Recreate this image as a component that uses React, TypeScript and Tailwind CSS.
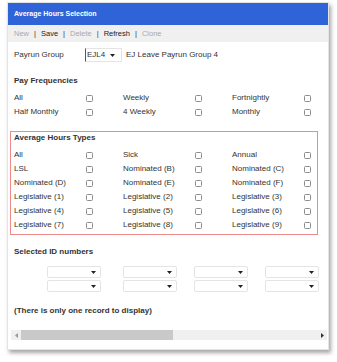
import { ReactNode } from 'react';

const payFrequencies = [
  ['All', 'Weekly', 'Fortnightly'],
  ['Half Monthly', '4 Weekly', 'Monthly'],
];

const hoursTypes = [
  ['All', 'Sick', 'Annual'],
  ['LSL', 'Nominated (B)', 'Nominated (C)'],
  ['Nominated (D)', 'Nominated (E)', 'Nominated (F)'],
  ['Legislative (1)', 'Legislative (2)', 'Legislative (3)'],
  ['Legislative (4)', 'Legislative (5)', 'Legislative (6)'],
  ['Legislative (7)', 'Legislative (8)', 'Legislative (9)'],
];

function Check() {
  return <span className="block shrink-0 w-[7px] h-[7px] border border-[#8c8c8c] rounded-[1.5px] bg-white" />;
}

function CheckGrid({ rows }: { rows: string[][] }) {
  return (
    <div className="flex flex-col">
      {rows.map((row, i) => (
        <div key={i} className="flex h-[14px] items-center">
          {row.map((label, j) => (
            <div key={label} className={`flex shrink-0 items-center ${j < 2 ? 'w-[109px]' : 'w-[79px]'}`}>
              <span className="w-[72px] shrink-0 text-[8px] text-[#333] whitespace-nowrap">{label}</span>
              <Check />
            </div>
          ))}
        </div>
      ))}
    </div>
  );
}

function Arrow() {
  return (
    <svg width="5" height="3" viewBox="0 0 5 3" className="block shrink-0">
      <path d="M0 0h5L2.5 3z" fill="#222" />
    </svg>
  );
}

function IdSelect({ className }: { className: string }) {
  return (
    <div className={`w-[54px] h-[12px] shrink-0 border border-[#e4e4e4] rounded-[2px] flex items-center justify-end pr-[4px] ${className}`}>
      <Arrow />
    </div>
  );
}

function Sep() {
  return <span className="text-[#333]">|</span>;
}

function Heading({ children, className = '' }: { children: ReactNode; className?: string }) {
  return <div className={`text-[8px] font-bold text-[#333] whitespace-nowrap ${className}`}>{children}</div>;
}

export default function App() {
  return (
    <div className="w-[337px] h-[362px] bg-white pt-[2px] font-['Liberation_Sans',Arial,sans-serif]">
      <div className="ml-[7px] w-[322px] h-[348px] bg-white border border-[#e4e4e4] shadow-[2px_3px_4px_rgba(0,0,0,0.35)] flex flex-col">
        {/* Title bar */}
        <div className="h-[22px] bg-[#2f63d8] flex items-center pl-[6px] text-white text-[7px] font-bold">
          Average Hours Selection
        </div>
        {/* Toolbar */}
        <div className="h-[17px] bg-[#f0f0f0] flex items-center gap-[5px] pl-[6px] text-[7.5px]">
          <span className="text-[#aaa]">New</span>
          <Sep />
          <span className="text-[#222]">Save</span>
          <Sep />
          <span className="text-[#aaa]">Delete</span>
          <Sep />
          <span className="text-[#222]">Refresh</span>
          <Sep />
          <span className="text-[#aaa]">Clone</span>
        </div>

        <div className="pl-[6px] flex flex-col">
          {/* Payrun group */}
          <div className="mt-[6px] flex h-[14px] items-center text-[8px] text-[#333]">
            <span className="w-[71px] shrink-0">Payrun Group</span>
            <div className="w-[37px] h-[14px] shrink-0 border border-[#e4e4e4] border-l-[#555] flex items-center pl-[1px] pr-[6px] justify-between">
              <span>EJL4</span>
              <Arrow />
            </div>
            <span className="ml-[4px]">EJ Leave Payrun Group 4</span>
          </div>

          {/* Pay frequencies */}
          <Heading className="mt-[12px] h-[14px] leading-[14px]">Pay Frequencies</Heading>
          <div className="mt-[3px]">
            <CheckGrid rows={payFrequencies} />
          </div>

          {/* Average hours types */}
          <div className="mt-[12px] -ml-[4px] w-[308px] border border-[#f08a8a] pl-[3px] pb-[2px]">
            <Heading className="h-[12px] leading-[12px]">Average Hours Types</Heading>
            <div className="mt-[4px]">
              <CheckGrid rows={hoursTypes} />
            </div>
          </div>

          {/* Selected IDs */}
          <Heading className="mt-[10px] h-[14px] leading-[14px]">Selected ID numbers</Heading>
          <div className="mt-[7px] flex flex-col gap-[2px]">
            {[0, 1].map((r) => (
              <div key={r} className="flex">
                <IdSelect className="ml-[33px]" />
                <IdSelect className="ml-[22px]" />
                <IdSelect className="ml-[17px]" />
                <IdSelect className="ml-[17px]" />
              </div>
            ))}
          </div>

          <Heading className="mt-[12px] h-[14px] leading-[14px]">(There is only one record to display)</Heading>

          {/* Horizontal scrollbar */}
          <div className="mt-[12px] -ml-[3px] w-[316px] h-[10px] bg-[#f0f0f0] flex items-center">
            <span className="w-[10px] flex justify-center">
              <svg width="3" height="5" viewBox="0 0 3 5"><path d="M3 0v5L0 2.5z" fill="#999" /></svg>
            </span>
            <div className="w-[152px] h-[10px] bg-[#c9c9c9]" />
            <div className="flex-1" />
            <span className="w-[10px] flex justify-center">
              <svg width="3" height="5" viewBox="0 0 3 5"><path d="M0 0v5L3 2.5z" fill="#333" /></svg>
            </span>
          </div>
        </div>
      </div>
    </div>
  );
}
